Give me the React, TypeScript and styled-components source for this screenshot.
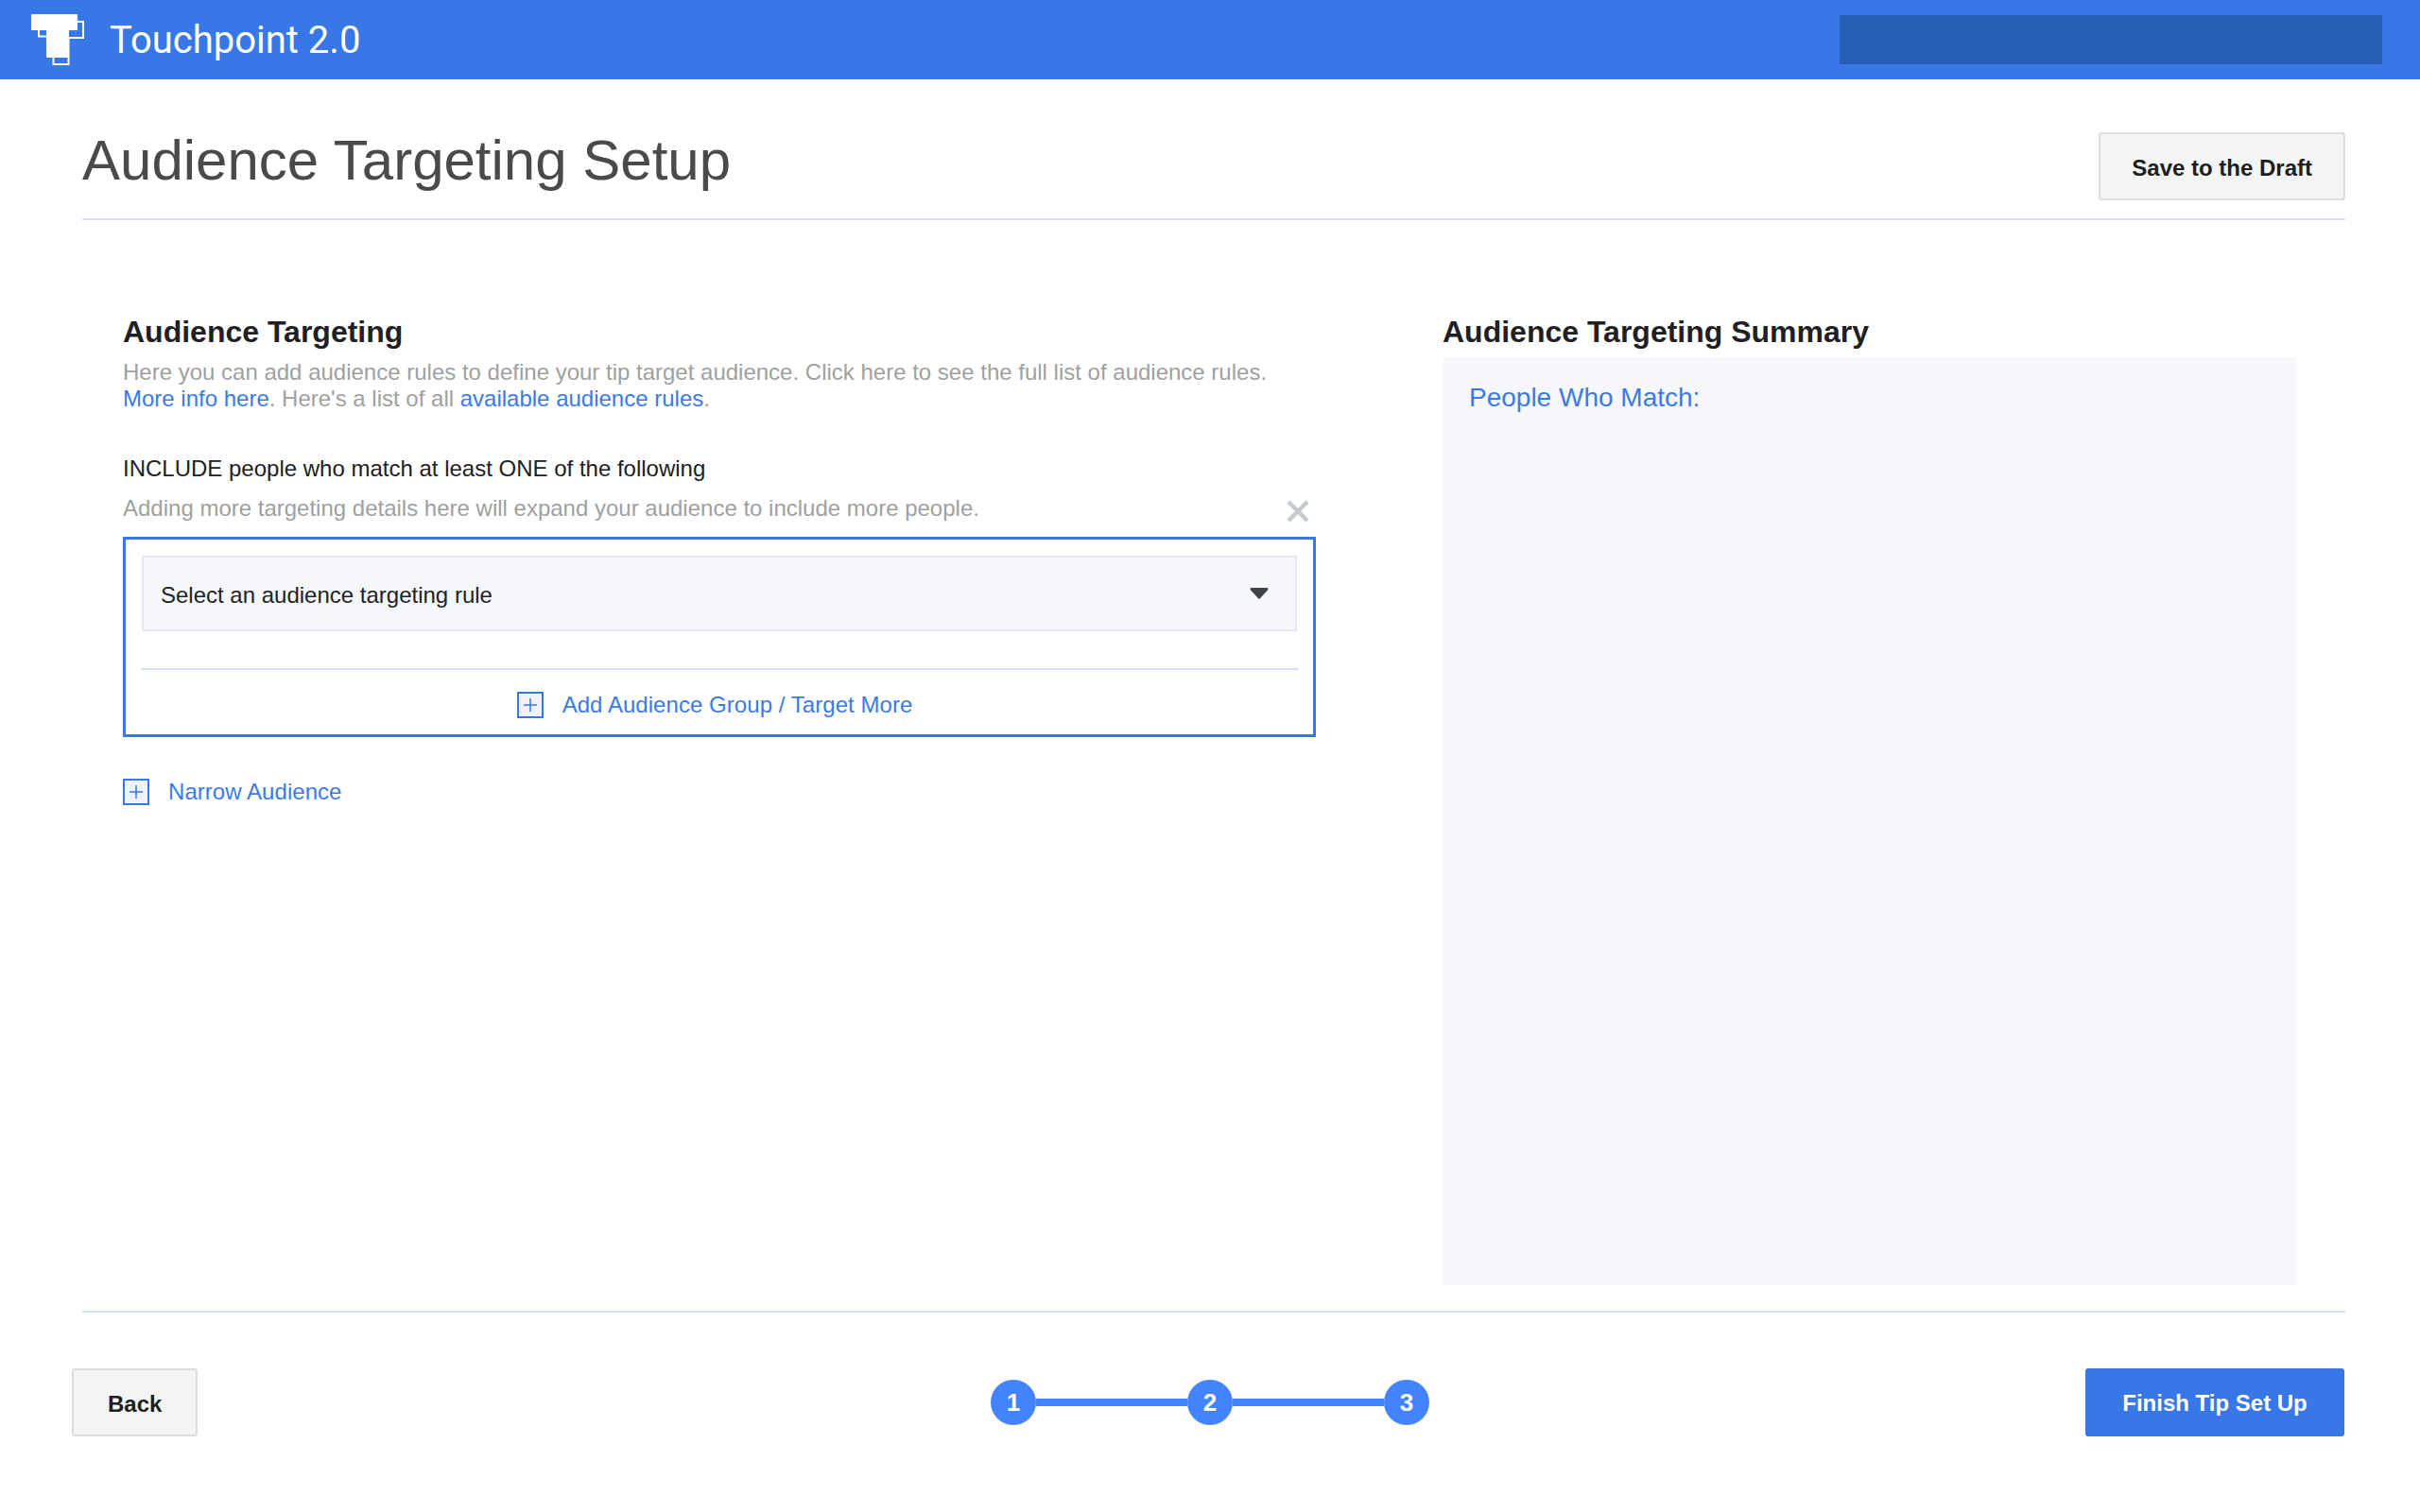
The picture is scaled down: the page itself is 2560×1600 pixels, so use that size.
import React from "react";
import styled, { createGlobalStyle } from "styled-components";

const BLUE = "#3777e6";
const LINK = "#3a7ae8";
const RULE = "#d5dff3";

const GlobalStyles = createGlobalStyle`
    html, body {
        margin: 0;
        padding: 0;
        background: #fff;
    }
    body {
        font-family: "Liberation Sans", Arial, sans-serif;
    }
`;

const Page = styled.div`
    width: 2560px;
    height: 1600px;
    overflow: hidden;
    display: flex;
    flex-direction: column;
`;

const Header = styled.header`
    height: 84px;
    background: ${BLUE};
    display: flex;
    align-items: center;
    padding: 0 40px 0 32px;
    flex: none;
`;

const Brand = styled.div`
    font-family: Roboto, sans-serif;
    font-size: 40px;
    color: #fff;
    margin-left: 26px;
    flex: 1;
`;

const SearchBlock = styled.div`
    width: 574px;
    height: 52px;
    background: #265eb5;
`;

const Main = styled.main`
    margin: 0 79px 0 87px;
    flex: none;
`;

const TitleRow = styled.div`
    height: 149px;
    box-sizing: border-box;
    padding-top: 56px;
    border-bottom: 2px solid ${RULE};
    display: flex;
    justify-content: space-between;
    align-items: flex-start;
`;

const Title = styled.h1`
    margin: -6px 0 0;
    font-size: 60px;
    line-height: 72px;
    font-weight: 400;
    color: #4a4a4a;
`;

const GreyButton = styled.button<{ $pad: number }>`
    height: 72px;
    padding: 3px ${(p) => p.$pad}px 0;
    box-sizing: border-box;
    background: #f3f4f4;
    border: 2px solid #dcdddd;
    border-radius: 3px;
    font-family: "Liberation Sans", Arial, sans-serif;
    font-size: 24px;
    font-weight: 700;
    color: #1e1e1e;
`;

const Columns = styled.div`
    display: grid;
    grid-template-columns: 1262px 904px;
    column-gap: 134px;
    padding: 0 0 0 43px;
    box-sizing: border-box;
    border-bottom: 2px solid ${RULE};
    height: 1156px;
`;

const Column = styled.section`
    padding-top: 99px;
`;

const SectionTitle = styled.h2`
    margin: 0 0 8px;
    font-size: 32px;
    line-height: 38px;
    font-weight: 700;
    color: #1f2023;
`;

const Description = styled.p`
    margin: 10px 0 0;
    font-size: 24px;
    line-height: 28px;
    color: #a0a0a0;
`;

const Link = styled.a`
    color: ${LINK};
`;

const RuleHeading = styled.div`
    margin-top: 46px;
    font-size: 24px;
    line-height: 28px;
    color: #1f2023;
`;

const HintRow = styled.div`
    margin-top: 14px;
    height: 36px;
    display: flex;
    justify-content: space-between;
    align-items: flex-start;
    padding-right: 6px;
    margin-bottom: 8px;
`;

const Hint = styled.span`
    font-size: 24px;
    line-height: 28px;
    color: #a0a0a0;
`;

const CloseIcon = styled.svg`
    width: 26px;
    height: 26px;
    margin-top: 4px;
`;

const RuleBox = styled.div`
    height: 212px;
    box-sizing: border-box;
    border: 3px solid ${BLUE};
    padding: 17px 17px 0 17px;
`;

const Select = styled.div`
    height: 80px;
    box-sizing: border-box;
    background: #f6f7fb;
    border: 2px solid #e6e9f5;
    display: flex;
    align-items: center;
    justify-content: space-between;
    padding: 3px 28px 0 18px;
    font-size: 24px;
    color: #222;
`;

const Caret = styled.svg`
    width: 20px;
    height: 12px;
    margin-top: -3px;
`;

const Divider = styled.div`
    height: 2px;
    background: ${RULE};
    margin: 39px -2px 0 -1px;
`;

const AddRow = styled.div<{ $center?: boolean }>`
    display: flex;
    align-items: center;
    justify-content: ${(p) => (p.$center ? "center" : "flex-start")};
    gap: 20px;
    font-size: 24px;
    letter-spacing: 0.05px;
    color: ${LINK};
`;

const AddGroupRow = styled(AddRow)`
    margin-top: 23px;
    padding-right: 10px;
`;

const NarrowRow = styled(AddRow)`
    margin-top: 44px;
`;

const AddLabel = styled.span`
    line-height: 24px;
`;

const PlusBox = styled.span`
    width: 28px;
    height: 28px;
    box-sizing: border-box;
    flex: none;
    display: flex;
    align-items: center;
    justify-content: center;
    background: #eef2fb;
    border: 2px solid ${BLUE};
`;

const SummaryPanel = styled.div`
    height: 982px;
    background: #f6f7fb;
    padding: 25px 28px;
    box-sizing: border-box;
    font-size: 28px;
    line-height: 36px;
    color: ${LINK};
`;

const Footer = styled.footer`
    display: grid;
    grid-template-columns: 972px 464px 1fr;
    align-items: center;
    padding: 59px 80px 0 76px;
`;

const FooterLeft = styled.div`
    justify-self: start;
`;

const FooterRight = styled.div`
    justify-self: end;
`;

const PrimaryButton = styled.button`
    width: 274px;
    height: 72px;
    padding: 2px 0 0;
    background: ${BLUE};
    border: none;
    border-radius: 3px;
    font-family: "Liberation Sans", Arial, sans-serif;
    font-size: 24px;
    font-weight: 700;
    color: #fff;
`;

const Stepper = styled.div`
    display: flex;
    align-items: center;
`;

const StepDot = styled.div`
    width: 48px;
    height: 48px;
    border-radius: 50%;
    background: #4383ff;
    color: #fff;
    font-size: 26px;
    font-weight: 700;
    display: flex;
    align-items: center;
    justify-content: center;
`;

const StepLine = styled.div`
    width: 160px;
    height: 8px;
    background: #4383ff;
`;

const LogoMark = styled.svg`
    width: 58px;
    height: 56px;
    flex: none;
`;

const Logo = () => (
    <LogoMark viewBox="32 15 58 56">
        <path
            d="M33 17a1 1 0 0 1 1-1H81a1 1 0 0 1 1 1V33H73V61a1 1 0 0 1-1 1H50a1 1 0 0 1-1-1V33H33Z"
            fill="#fff"
        />
        <path
            d="M82 24H88V41H73M56.500 62V69H72.500V41M41 33V39.500H49"
            fill="none"
            stroke="#fff"
            strokeWidth="2"
        />
    </LogoMark>
);

const Plus = () => (
    <svg width="14" height="14" viewBox="0 0 14 14">
        <path d="M7 0V14M0 7H14" stroke={BLUE} strokeWidth="1.500" />
    </svg>
);

const App: React.FC = () => {
    return (
        <Page>
            <GlobalStyles />
            <Header>
                <Logo />
                <Brand>Touchpoint 2.0</Brand>
                <SearchBlock />
            </Header>
            <Main>
                <TitleRow>
                    <Title>Audience Targeting Setup</Title>
                    <GreyButton $pad={33}>Save to the Draft</GreyButton>
                </TitleRow>
                <Columns>
                    <Column>
                        <SectionTitle>Audience Targeting</SectionTitle>
                        <Description>
                            Here you can add audience rules to define your tip target audience. Click here to see the full list of audience rules.
                            <br />
                            <Link>More info here</Link>. Here's a list of all <Link>available audience rules</Link>.
                        </Description>
                        <RuleHeading>INCLUDE people who match at least ONE of the following</RuleHeading>
                        <HintRow>
                            <Hint>Adding more targeting details here will expand your audience to include more people.</Hint>
                            <CloseIcon viewBox="0 0 26 26">
                                <path d="M3 3L23 23M23 3L3 23" stroke="#c5c9d0" strokeWidth="4.500" />
                            </CloseIcon>
                        </HintRow>
                        <RuleBox>
                            <Select>
                                Select an audience targeting rule
                                <Caret viewBox="0 0 20 12">
                                    <path
                                        d="M2 0H18C19.500 0 20 1.500 19 2.500L12 10C11 12 9 12 8 10L1 2.500C0 1.500 .5 0 2 0Z"
                                        fill="#3f4246"
                                    />
                                </Caret>
                            </Select>
                            <Divider />
                            <AddGroupRow $center>
                                <PlusBox>
                                    <Plus />
                                </PlusBox>
                                <AddLabel>Add Audience Group / Target More</AddLabel>
                            </AddGroupRow>
                        </RuleBox>
                        <NarrowRow>
                            <PlusBox>
                                <Plus />
                            </PlusBox>
                            <AddLabel>Narrow Audience</AddLabel>
                        </NarrowRow>
                    </Column>
                    <Column>
                        <SectionTitle>Audience Targeting Summary</SectionTitle>
                        <SummaryPanel>People Who Match:</SummaryPanel>
                    </Column>
                </Columns>
            </Main>
            <Footer>
                <FooterLeft>
                    <GreyButton $pad={36}>Back</GreyButton>
                </FooterLeft>
                <Stepper>
                    <StepDot>1</StepDot>
                    <StepLine />
                    <StepDot>2</StepDot>
                    <StepLine />
                    <StepDot>3</StepDot>
                </Stepper>
                <FooterRight>
                    <PrimaryButton>Finish Tip Set Up</PrimaryButton>
                </FooterRight>
            </Footer>
        </Page>
    );
};

export default App;
